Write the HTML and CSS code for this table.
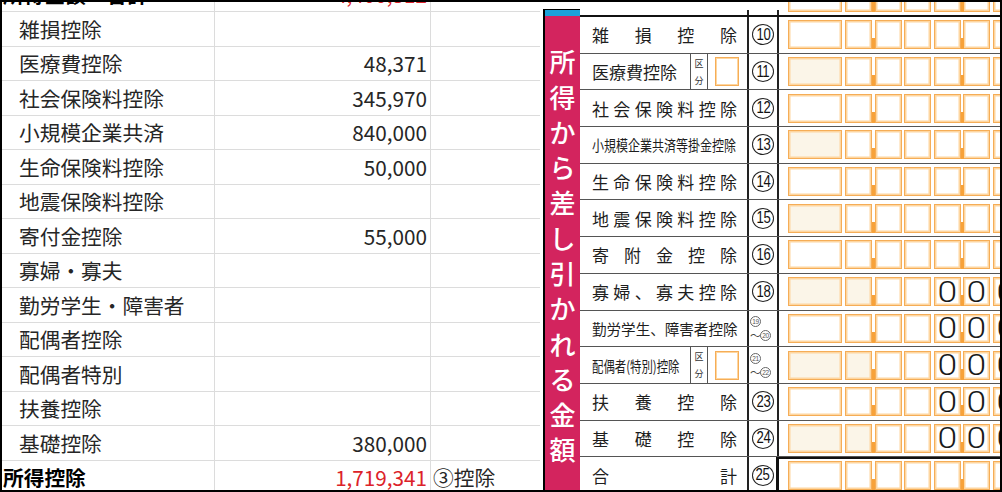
FILE: index.html
```html
<!DOCTYPE html>
<html lang="ja">
<head>
<meta charset="utf-8">
<title>所得控除</title>
<link rel="stylesheet" href="styles.css">
</head>
<body>
<div class="frame">
  <div class="sheet">
    <div class="grid">
      <div class="c1 bold">所得金額　合計</div><div class="c2 red">4,400,312</div><div class="c3"></div>
      <div class="c1">雑損控除</div><div class="c2"></div><div class="c3"></div>
      <div class="c1">医療費控除</div><div class="c2">48,371</div><div class="c3"></div>
      <div class="c1">社会保険料控除</div><div class="c2">345,970</div><div class="c3"></div>
      <div class="c1">小規模企業共済</div><div class="c2">840,000</div><div class="c3"></div>
      <div class="c1">生命保険料控除</div><div class="c2">50,000</div><div class="c3"></div>
      <div class="c1">地震保険料控除</div><div class="c2"></div><div class="c3"></div>
      <div class="c1">寄付金控除</div><div class="c2">55,000</div><div class="c3"></div>
      <div class="c1">寡婦・寡夫</div><div class="c2"></div><div class="c3"></div>
      <div class="c1">勤労学生・障害者</div><div class="c2"></div><div class="c3"></div>
      <div class="c1">配偶者控除</div><div class="c2"></div><div class="c3"></div>
      <div class="c1">配偶者特別</div><div class="c2"></div><div class="c3"></div>
      <div class="c1">扶養控除</div><div class="c2"></div><div class="c3"></div>
      <div class="c1">基礎控除</div><div class="c2">380,000</div><div class="c3"></div>
      <div class="c1 bold">所得控除</div><div class="c2 red">1,719,341</div><div class="c3">③控除</div>
    </div>
  </div>
  <div class="gap"></div>
  <div class="form">
    <div class="band">
      <div class="band-top"></div>
      <div class="band-blue"></div>
      <div class="band-red">
        <span>所</span><span>得</span><span>か</span><span>ら</span><span>差</span><span>し</span><span>引</span><span>か</span><span>れ</span><span>る</span><span>金</span><span>額</span>
      </div>
    </div>
    <div class="tbl">
      <div class="strip">
        <div class="s-lbl"></div>
        <div class="s-num"></div>
        <div class="bx">
          <div class="box w"></div><div class="box"></div><div class="box m"></div><div class="box"></div><div class="box"></div><div class="box m"></div><div class="box"></div>
        </div>
      </div>
      <div class="rows">
        <!-- 10 -->
        <div class="frow">
          <div class="lab"><div class="t sp"><span>雑</span><span>損</span><span>控</span><span>除</span></div></div>
          <div class="num"><div class="circ"><span>10</span></div></div>
          <div class="bx"><div class="box w"></div><div class="box"></div><div class="box m"></div><div class="box"></div><div class="box"></div><div class="box m"></div><div class="box"></div></div>
        </div>
        <!-- 11 -->
        <div class="frow">
          <div class="lab k"><div class="t">医療費控除</div><div class="kb"><span>区</span><span>分</span></div><div class="kx"><div class="kbox"></div></div></div>
          <div class="num"><div class="circ"><span>11</span></div></div>
          <div class="bx"><div class="box w cr"></div><div class="box"></div><div class="box m"></div><div class="box"></div><div class="box"></div><div class="box m"></div><div class="box"></div></div>
        </div>
        <!-- 12 -->
        <div class="frow">
          <div class="lab"><div class="t sp"><span>社</span><span>会</span><span>保</span><span>険</span><span>料</span><span>控</span><span>除</span></div></div>
          <div class="num"><div class="circ"><span>12</span></div></div>
          <div class="bx"><div class="box w"></div><div class="box"></div><div class="box m"></div><div class="box"></div><div class="box"></div><div class="box m"></div><div class="box"></div></div>
        </div>
        <!-- 13 -->
        <div class="frow">
          <div class="lab"><div class="t"><span class="cond c80">小規模企業共済等掛金控除</span></div></div>
          <div class="num"><div class="circ"><span>13</span></div></div>
          <div class="bx"><div class="box w cr"></div><div class="box"></div><div class="box m"></div><div class="box"></div><div class="box"></div><div class="box m"></div><div class="box"></div></div>
        </div>
        <!-- 14 -->
        <div class="frow">
          <div class="lab"><div class="t sp"><span>生</span><span>命</span><span>保</span><span>険</span><span>料</span><span>控</span><span>除</span></div></div>
          <div class="num"><div class="circ"><span>14</span></div></div>
          <div class="bx"><div class="box w"></div><div class="box"></div><div class="box m"></div><div class="box"></div><div class="box"></div><div class="box m"></div><div class="box"></div></div>
        </div>
        <!-- 15 -->
        <div class="frow">
          <div class="lab"><div class="t sp"><span>地</span><span>震</span><span>保</span><span>険</span><span>料</span><span>控</span><span>除</span></div></div>
          <div class="num"><div class="circ"><span>15</span></div></div>
          <div class="bx"><div class="box w cr"></div><div class="box"></div><div class="box m"></div><div class="box"></div><div class="box"></div><div class="box m"></div><div class="box"></div></div>
        </div>
        <!-- 16 -->
        <div class="frow">
          <div class="lab"><div class="t sp"><span>寄</span><span>附</span><span>金</span><span>控</span><span>除</span></div></div>
          <div class="num"><div class="circ"><span>16</span></div></div>
          <div class="bx"><div class="box w"></div><div class="box"></div><div class="box m"></div><div class="box"></div><div class="box"></div><div class="box m"></div><div class="box"></div></div>
        </div>
        <!-- 18 -->
        <div class="frow">
          <div class="lab"><div class="t sp"><span>寡</span><span>婦</span><span>、</span><span>寡</span><span>夫</span><span>控</span><span>除</span></div></div>
          <div class="num"><div class="circ"><span>18</span></div></div>
          <div class="bx"><div class="box w cr"></div><div class="box cr"></div><div class="box m"></div><div class="box"></div><div class="box z"><span>0</span></div><div class="box m z"><span>0</span></div><div class="box z"><span>0</span></div></div>
        </div>
        <!-- 19-20 -->
        <div class="frow">
          <div class="lab"><div class="t"><span class="cond c97">勤労学生、障害者控除</span></div></div>
          <div class="num"><div class="pair"><div class="sc">19</div><div class="pr"><span class="tl">～</span><div class="sc">20</div></div></div></div>
          <div class="bx"><div class="box w"></div><div class="box"></div><div class="box m"></div><div class="box"></div><div class="box z"><span>0</span></div><div class="box m z"><span>0</span></div><div class="box z"><span>0</span></div></div>
        </div>
        <!-- 21-22 -->
        <div class="frow">
          <div class="lab k"><div class="t"><span class="cond c76">配偶者(特別)控除</span></div><div class="kb"><span>区</span><span>分</span></div><div class="kx"><div class="kbox"></div></div></div>
          <div class="num"><div class="pair"><div class="sc">21</div><div class="pr"><span class="tl">～</span><div class="sc">22</div></div></div></div>
          <div class="bx"><div class="box w cr"></div><div class="box cr"></div><div class="box m"></div><div class="box"></div><div class="box z"><span>0</span></div><div class="box m z"><span>0</span></div><div class="box z"><span>0</span></div></div>
        </div>
        <!-- 23 -->
        <div class="frow">
          <div class="lab"><div class="t sp"><span>扶</span><span>養</span><span>控</span><span>除</span></div></div>
          <div class="num"><div class="circ"><span>23</span></div></div>
          <div class="bx"><div class="box w"></div><div class="box"></div><div class="box m"></div><div class="box"></div><div class="box z"><span>0</span></div><div class="box m z"><span>0</span></div><div class="box z"><span>0</span></div></div>
        </div>
        <!-- 24 -->
        <div class="frow">
          <div class="lab"><div class="t sp"><span>基</span><span>礎</span><span>控</span><span>除</span></div></div>
          <div class="num"><div class="circ"><span>24</span></div></div>
          <div class="bx"><div class="box w cr"></div><div class="box cr"></div><div class="box m"></div><div class="box"></div><div class="box z"><span>0</span></div><div class="box m z"><span>0</span></div><div class="box z"><span>0</span></div></div>
        </div>
        <!-- 25 -->
        <div class="frow total">
          <div class="lab"><div class="t sp"><span>合</span><span>計</span></div></div>
          <div class="num"><div class="circ"><span>25</span></div></div>
          <div class="bx"><div class="box w"></div><div class="box"></div><div class="box m"></div><div class="box"></div><div class="box"></div><div class="box m"></div><div class="box"></div></div>
        </div>
      </div>
    </div>
  </div>
</div>
</body>
</html>
```

FILE: styles.css
```css
html, body {
  margin: 0;
  padding: 0;
  background: #fff;
}

.frame {
  width: 1002px;
  height: 492px;
  box-sizing: border-box;
  border: 2px solid #000;
  display: flex;
  overflow: hidden;
  background: #fff;
}

/* ---------- spreadsheet ---------- */
.sheet {
  width: 538px;
  flex: none;
  overflow: hidden;
  font-family: "Noto Sans CJK JP", "Noto Sans", sans-serif;
  font-size: 20.7px;
  color: #262626;
}

.grid {
  display: grid;
  grid-template-columns: 213px 216px 109px;
  grid-auto-rows: 34.5px;
  margin-top: -24.5px;
}

.grid > div {
  box-sizing: border-box;
  border-bottom: 1px solid #dcdcdc;
  display: flex;
  align-items: center;
  white-space: nowrap;
  overflow: hidden;
}

.c1 {
  border-right: 1px solid #dcdcdc;
  padding-left: 17px;
}

.c2 {
  border-right: 1px solid #dcdcdc;
  justify-content: flex-end;
  padding-right: 3px;
}

.c3 {
  padding-left: 2px;
}

.grid > .bold {
  font-weight: 700;
  padding-left: 1px;
  color: #000;
}

.red {
  color: #dc2229;
}

.gap {
  width: 3px;
  flex: none;
}

/* ---------- form ---------- */
.form {
  width: 457px;
  flex: none;
  display: flex;
  font-family: "Noto Sans CJK JP", "Noto Sans", sans-serif;
  color: #1e1e1e;
}

.band {
  width: 37px;
  flex: none;
  display: flex;
  flex-direction: column;
}

.band-top {
  height: 7px;
  flex: none;
}

.band-blue {
  height: 7px;
  flex: none;
  box-sizing: border-box;
  border-top: 1px solid #000;
  border-left: 2px solid #000;
  background: #1ca1d9;
}

.band-red {
  flex: 1;
  border-left: 2px solid #000;
  background: #d3245e;
  display: flex;
  flex-direction: column;
  align-items: center;
  justify-content: center;
  padding-top: 4px;
  color: #fff;
  font-size: 26px;
  line-height: 35.3px;
  font-weight: 500;
}

.tbl {
  width: 420px;
  flex: none;
  display: flex;
  flex-direction: column;
}

.strip {
  height: 13px;
  flex: none;
  display: flex;
  align-items: flex-end;
  overflow: hidden;
}

.s-lbl {
  width: 167px;
  flex: none;
}

.s-num {
  width: 32px;
  height: 5px;
  flex: none;
  box-sizing: border-box;
  border-left: 2px solid #222;
  border-right: 2px solid #222;
}

.strip .bx {
  padding-bottom: 3px;
}

.rows {
  flex: 1;
  border-top: 2px solid #111;
  overflow: hidden;
}

.frow {
  height: 36.7px;
  box-sizing: border-box;
  border-bottom: 1px solid #555;
  display: flex;
}

.lab {
  width: 167px;
  flex: none;
  display: flex;
}

.t {
  flex: 1;
  display: flex;
  align-items: center;
  padding: 0 10px 0 12px;
  font-size: 17px;
  white-space: nowrap;
}

.t.sp {
  justify-content: space-between;
}

.cond {
  display: inline-block;
  font-size: 15px;
  transform-origin: left center;
}

.c80 { transform: scaleX(0.8); }
.c97 { transform: scaleX(0.97); }
.c76 { transform: scaleX(0.76); }

.lab.k .t {
  flex: none;
  width: 110px;
  box-sizing: border-box;
}

.kb {
  width: 18px;
  flex: none;
  box-sizing: border-box;
  border-left: 1px solid #555;
  border-right: 1px solid #555;
  display: flex;
  flex-direction: column;
  align-items: center;
  justify-content: center;
  gap: 8px;
  font-size: 9px;
  line-height: 1;
  color: #333;
}

.kx {
  flex: 1;
  display: flex;
  align-items: center;
  padding-left: 7px;
}

.kbox {
  width: 24px;
  height: 29px;
  box-sizing: border-box;
  border: 1px solid #f5ad57;
  box-shadow: inset 0 0 0 1px #fed6a0;
}

.num {
  width: 32px;
  flex: none;
  box-sizing: border-box;
  border-left: 2px solid #222;
  border-right: 2px solid #222;
  display: flex;
  align-items: center;
  justify-content: center;
}

.circ {
  width: 22px;
  height: 21px;
  box-sizing: border-box;
  border: 1.3px solid #222;
  border-radius: 50%;
  display: flex;
  align-items: center;
  justify-content: center;
  font-family: "Liberation Sans", Arial, sans-serif;
  font-size: 16px;
  line-height: 1;
  color: #111;
}

.circ span {
  display: inline-block;
  transform: scaleX(0.82);
  letter-spacing: -0.5px;
}

.pair {
  width: 26px;
  display: flex;
  flex-direction: column;
  align-items: flex-start;
  gap: 3px;
  margin-top: 1px;
}

.pr {
  display: flex;
  align-items: center;
}

.tl {
  font-size: 11px;
  line-height: 1;
  color: #444;
  width: 10px;
}

.sc {
  width: 11px;
  height: 11px;
  box-sizing: border-box;
  border: 1px solid #666;
  border-radius: 50%;
  display: flex;
  align-items: center;
  justify-content: center;
  font-family: "Liberation Sans", Arial, sans-serif;
  font-size: 6.5px;
  color: #555;
  letter-spacing: -0.3px;
}

.bx {
  flex: 1;
  min-width: 0;
  display: flex;
  align-items: center;
  padding-left: 9px;
  overflow: hidden;
}

.box {
  position: relative;
  width: 27px;
  height: 29px;
  flex: none;
  box-sizing: border-box;
  border: 1px solid #f5ad57;
  box-shadow: inset 0 0 0 1.5px #fed6a0;
  background: #fff;
  margin-left: 2.5px;
}

.box.w {
  width: 54px;
  margin-left: 0;
}

.box.w + .box {
  margin-left: 3px;
}

.box.cr {
  background: #fbf5e8;
}

.box.m::before {
  content: "";
  position: absolute;
  left: -3.5px;
  bottom: -1px;
  width: 3px;
  height: 11px;
  background: #f7a23a;
}

.box.z {
  display: flex;
  align-items: center;
  justify-content: center;
  font-family: Roboto, "Liberation Sans", sans-serif;
  font-weight: 300;
  font-size: 30px;
  line-height: 1;
  color: #1a1a1a;
}

.box.z span {
  display: inline-block;
  transform: scaleX(1.18);
}

.frow.total .bx {
  border-top: 2px solid #111;
  align-items: flex-start;
  padding-top: 2px;
}

.frow.total .num {
  border-right: 3px solid #111;
}
```
